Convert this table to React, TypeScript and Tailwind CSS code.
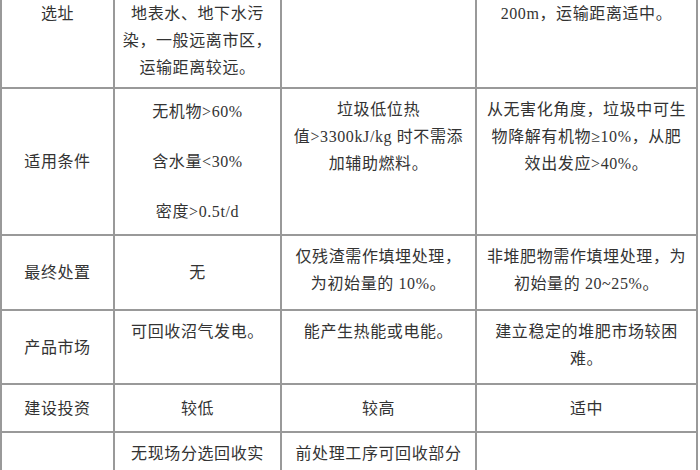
const font = {
  fontFamily: '"Liberation Serif", "Noto Sans CJK SC", serif',
};

type Cell = {
  lines: string[];
  align?: "top" | "center" | "first";
  gap?: boolean;
};

const rows: Cell[][] = [
  [
    { lines: ["选址"], align: "first" },
    { lines: ["地表水、地下水污", "染，一般远离市区，", "运输距离较远。"], align: "first" },
    { lines: [], align: "first" },
    { lines: ["200m，运输距离适中。"], align: "first" },
  ],
  [
    { lines: ["适用条件"] },
    { lines: ["无机物>60%", "含水量<30%", "密度>0.5t/d"], gap: true },
    { lines: ["垃圾低位热", "值>3300kJ/kg 时不需添", "加辅助燃料。"], align: "top" },
    { lines: ["从无害化角度，垃圾中可生", "物降解有机物≥10%，从肥", "效出发应>40%。"], align: "top" },
  ],
  [
    { lines: ["最终处置"] },
    { lines: ["无"] },
    { lines: ["仅残渣需作填埋处理，", "为初始量的 10%。"], align: "top" },
    { lines: ["非堆肥物需作填埋处理，为", "初始量的 20~25%。"], align: "top" },
  ],
  [
    { lines: ["产品市场"] },
    { lines: ["可回收沼气发电。"], align: "top" },
    { lines: ["能产生热能或电能。"], align: "top" },
    { lines: ["建立稳定的堆肥市场较困", "难。"], align: "top" },
  ],
  [
    { lines: ["建设投资"] },
    { lines: ["较低"] },
    { lines: ["较高"] },
    { lines: ["适中"] },
  ],
  [
    { lines: [] },
    { lines: ["无现场分选回收实"], align: "top" },
    { lines: ["前处理工序可回收部分"], align: "top" },
    { lines: [] },
  ],
];

function TableCell({ cell, col }: { cell: Cell; col: number }) {
  let v = "justify-center ";
  if (cell.align === "top") v = "justify-start pt-[7px] ";
  if (cell.align === "first") v = "justify-start ";
  return (
    <div
      className={
        "flex flex-col items-center border-r-2 border-b-2 border-[#999] px-1 text-center " +
        (col === 0 ? "border-l-2 " : "") +
        v +
        (cell.gap ? "gap-[23px]" : "")
      }
    >
      {cell.lines.map((l, i) => (
        <div key={i} className="whitespace-nowrap">
          {l}
        </div>
      ))}
    </div>
  );
}

export default function App() {
  return (
    <div className="h-[470px] w-[700px] overflow-hidden bg-white">
      <div
        style={font}
        className="grid w-[698px] grid-cols-[115px_167px_195px_221px] grid-rows-[89px_147px_75px_74px_48px_60px] text-[16px] leading-[27px] tracking-[0.6px] text-[#333]"
      >
        {rows.map((r, ri) =>
          r.map((c, ci) => <TableCell key={ri + "-" + ci} cell={c} col={ci} />)
        )}
      </div>
    </div>
  );
}
